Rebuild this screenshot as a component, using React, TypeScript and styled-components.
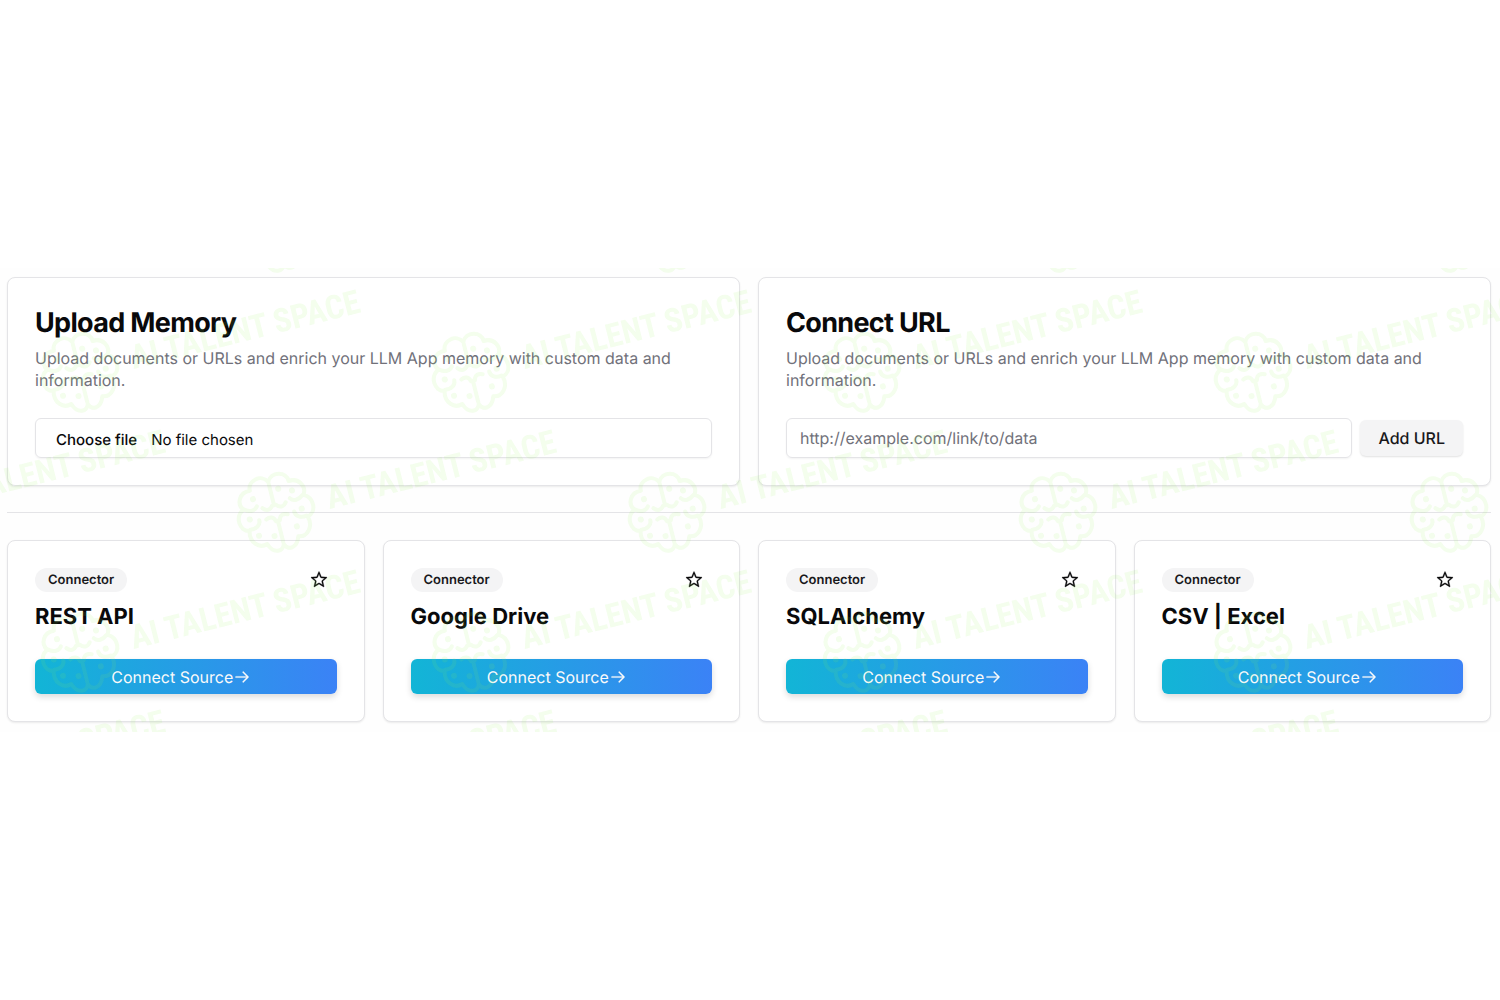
import React, { useState } from "react";
import styled, { createGlobalStyle } from "styled-components";

const GlobalStyle = createGlobalStyle`
  *, *::before, *::after { box-sizing: border-box; }
  body {
    margin: 0;
    background: #fff;
    color: #09090b;
    font-family: Inter, "Liberation Sans", sans-serif;
    font-size: 16px;
    line-height: 22px;
    text-rendering: geometricPrecision;
  }
  h2, h3, p { margin: 0; }
  button, input { font: inherit; color: inherit; text-rendering: inherit; }
`;

const Page = styled.main`
  min-height: 100vh;
  display: flex;
  flex-direction: column;
  justify-content: center;
`;

const Board = styled.div`
  position: relative;
  overflow: hidden;
  background: #fefefe;
  padding: 9px 9px 10px 7px;
`;

const Row = styled.section<{ $columns: number }>`
  display: grid;
  grid-template-columns: repeat(${(p) => p.$columns}, minmax(0, 1fr));
  gap: 18px;
`;

const Card = styled.article`
  background: #fff;
  border: 1px solid #e4e4e7;
  border-radius: 8px;
  padding: 27px;
  box-shadow: 0 1px 2px rgba(0, 0, 0, 0.08);
`;

const Title = styled.h2`
  font-size: 27px;
  line-height: 36px;
  font-weight: 700;
  letter-spacing: -0.025em;
`;

const Description = styled.p`
  margin-top: 6px;
  color: #71717a;
`;

const Controls = styled.form`
  display: flex;
  align-items: center;
  gap: 8px;
  margin-top: 27px;
`;

const field = `
  flex: 1;
  min-width: 0;
  height: 40px;
  border: 1px solid #e4e4e7;
  border-radius: 6px;
  background: transparent;
  box-shadow: 0 1px 2px rgba(0, 0, 0, 0.05);
`;

const FileField = styled.label`
  ${field}
  position: relative;
  display: flex;
  align-items: center;
  gap: 14px;
  padding: 4px 20px 0;
  font-size: 15px;
  cursor: pointer;
`;

const FileInput = styled.input`
  position: absolute;
  inset: 0;
  width: 100%;
  opacity: 0;
  cursor: pointer;
`;

const FileAction = styled.span`
  font-weight: 500;
`;

const UrlInput = styled.input`
  ${field}
  padding: 0 13px;
  outline: none;
  &::placeholder { color: #71717a; opacity: 1; }
`;

const HiddenLabel = styled.label`
  position: absolute;
  width: 1px;
  height: 1px;
  overflow: hidden;
  clip-path: inset(50%);
`;

const AddButton = styled.button`
  height: 36px;
  padding: 0 18px;
  border: 0;
  border-radius: 6px;
  background: #f4f4f5;
  color: #18181b;
  font-weight: 500;
  box-shadow: 0 1px 2px rgba(0, 0, 0, 0.12);
  cursor: pointer;
`;

const Divider = styled.hr`
  height: 1px;
  margin: 26px 0 27px;
  border: 0;
  background: #e4e4e7;
`;

const CardTop = styled.div`
  display: flex;
  align-items: center;
  justify-content: space-between;
  height: 24px;
`;

const Badge = styled.span`
  padding: 1px 13px;
  border-radius: 12px;
  background: #f4f4f5;
  color: #18181b;
  font-size: 13px;
  font-weight: 600;
`;

const StarButton = styled.button`
  display: grid;
  place-items: center;
  width: 36px;
  height: 36px;
  padding: 0;
  border: 0;
  background: transparent;
  cursor: pointer;
`;

const Name = styled.h3`
  margin-top: 8px;
  font-size: 22px;
  line-height: 34px;
  font-weight: 700;
`;

const ConnectButton = styled.button`
  display: flex;
  align-items: center;
  justify-content: center;
  width: 100%;
  height: 35px;
  margin-top: 25px;
  padding: 0 9px 0 0;
  border: 0;
  border-radius: 6px;
  background: linear-gradient(to right, #12b5d6, #3b82f6);
  color: #fafafa;
  box-shadow: 0 3px 6px rgba(0, 0, 0, 0.14);
  cursor: pointer;
`;

const Watermark = styled.svg`
  position: absolute;
  inset: 0;
  width: 100%;
  height: 100%;
  pointer-events: none;
  opacity: 0.1;
  color: #90f050;
  font-family: "Liberation Sans Narrow", "Roboto Condensed", "DejaVu Sans Condensed", sans-serif;
  font-size: 33px;
  font-weight: 700;
`;

const StarIcon = () => (
  <svg width="18" height="18" viewBox="0 0 15 15" fill="currentColor" stroke="currentColor" strokeWidth="0.25" aria-hidden="true">
    <path fillRule="evenodd" clipRule="evenodd" d="M6.97942 1.25171L6.9585 1.30199L5.58662 4.60039C5.54342 4.70426 5.44573 4.77523 5.3336 4.78422L1.7727 5.0697L1.71841 5.07405L1.38687 5.10063L1.08608 5.12475C0.820085 5.14607 0.712228 5.47802 0.914889 5.65162L1.14406 5.84793L1.39666 6.06431L1.43802 6.09974L4.15105 8.42374C4.23648 8.49692 4.2738 8.61176 4.24769 8.72118L3.41882 12.196L3.40618 12.249L3.32901 12.5725L3.25899 12.866C3.19708 13.1256 3.47945 13.3308 3.70718 13.1917L3.9647 13.0344L4.24854 12.861L4.29502 12.8326L7.34365 10.9705C7.43965 10.9119 7.5604 10.9119 7.6564 10.9705L10.705 12.8326L10.7515 12.861L11.0354 13.0344L11.2929 13.1917C11.5206 13.3308 11.803 13.1256 11.7411 12.866L11.671 12.5725L11.5939 12.249L11.5812 12.196L10.7524 8.72118C10.7263 8.61176 10.7636 8.49692 10.849 8.42374L13.562 6.09974L13.6034 6.06431L13.856 5.84793L14.0852 5.65162C14.2878 5.47802 14.18 5.14607 13.914 5.12475L13.6132 5.10063L13.2816 5.07405L13.2274 5.0697L9.66645 4.78422C9.55432 4.77523 9.45663 4.70426 9.41343 4.60039L8.04155 1.30199L8.02064 1.25171L7.89291 0.944609L7.77702 0.665992C7.67454 0.419604 7.32551 0.419604 7.22303 0.665992L7.10715 0.944609L6.97942 1.25171ZM7.50003 2.60397L6.50994 4.98442C6.32273 5.43453 5.89944 5.74207 5.41351 5.78103L2.84361 5.98705L4.8016 7.66428C5.17183 7.98142 5.33351 8.47903 5.2204 8.95321L4.62221 11.461L6.8224 10.1171C7.23842 9.86302 7.76164 9.86302 8.17766 10.1171L10.3778 11.461L9.77965 8.95321C9.66654 8.47903 9.82822 7.98142 10.1984 7.66428L12.1564 5.98705L9.58654 5.78103C9.10061 5.74207 8.67732 5.43453 8.49011 4.98442L7.50003 2.60397Z" />
  </svg>
);

const ArrowIcon = () => (
  <svg width="18" height="18" viewBox="0 0 15 15" fill="currentColor" stroke="currentColor" strokeWidth="0.3" aria-hidden="true">
    <path fillRule="evenodd" clipRule="evenodd" d="M8.14645 3.14645C8.34171 2.95118 8.65829 2.95118 8.85355 3.14645L12.8536 7.14645C13.0488 7.34171 13.0488 7.65829 12.8536 7.85355L8.85355 11.8536C8.65829 12.0488 8.34171 12.0488 8.14645 11.8536C7.95118 11.6583 7.95118 11.3417 8.14645 11.1464L11.2929 8H2.5C2.22386 8 2 7.77614 2 7.5C2 7.22386 2.22386 7 2.5 7H11.2929L8.14645 3.85355C7.95118 3.65829 7.95118 3.34171 8.14645 3.14645Z" />
  </svg>
);

const Brain = () => (
  <g fill="none" stroke="currentColor" strokeWidth="4" strokeLinecap="round" strokeLinejoin="round">
    <path d="M0 -32 C-5 -42 -20 -38 -20 -28 C-31 -29 -36 -18 -31 -11 C-41 -6 -40 9 -30 11 C-33 22 -25 31 -16 28 C-12 40 -2 39 0 32 C2 39 12 40 16 28 C25 31 33 22 30 11 C40 9 41 -6 31 -11 C36 -18 31 -29 20 -28 C20 -38 5 -42 0 -32 Z" />
    <path d="M0 -30 V-8 M0 30 V8 M-30 -11 C-25 -7 -20 -7 -17 -11 M30 -11 C25 -7 20 -7 17 -11 M-29 10 C-23 11 -18 8 -18 3 M29 10 C23 11 18 8 18 3 M-2 -8 C-5 -4 -9 -4 -12 -8 M2 -8 C5 -4 9 -4 12 -8 M-2 8 C-3 3 -7 2 -11 4 M2 8 C3 3 7 2 11 4" />
    <g fill="currentColor" stroke="none">
      <circle cx="-19" cy="-19" r="3" />
      <circle cx="8" cy="-23" r="3" />
      <circle cx="21" cy="-18" r="3" />
      <circle cx="-27" cy="0" r="3" />
      <circle cx="26" cy="2" r="3" />
      <circle cx="-22" cy="18" r="3" />
      <circle cx="-7" cy="22" r="3" />
      <circle cx="17" cy="18" r="3" />
    </g>
  </g>
);

const TILE_X = 391;
const TILE_Y = 140;

const marks = Array.from({ length: 5 }, (_, row) =>
  Array.from({ length: 6 }, (_, col) => ({
    x: 80 + (col - 1) * TILE_X + (row % 2 === 0 ? 196 : 0),
    y: -35 + row * TILE_Y,
    labelled: row > 0,
  }))
)
  .flat()
  .filter(({ x }) => x > -290 && x < 1540);

const WatermarkLayer = () => (
  <Watermark aria-hidden="true">
    {marks.map(({ x, y, labelled }) => (
      <g key={`${x}:${y}`} transform={`translate(${x} ${y}) rotate(-14)`}>
        <Brain />
        {labelled && x < 1440 && (
          <text x="53" y="9" fill="currentColor">AI TALENT SPACE</text>
        )}
      </g>
    ))}
  </Watermark>
);

const BLURB =
  "Upload documents or URLs and enrich your LLM App memory with custom data and information.";

const connectors = ["REST API", "Google Drive", "SQLAlchemy", "CSV | Excel"];

export default function App() {
  const [fileName, setFileName] = useState("No file chosen");

  return (
    <Page>
      <GlobalStyle />
      <Board>
        <Row $columns={2}>
          <Card>
            <Title>Upload Memory</Title>
            <Description>{BLURB}</Description>
            <Controls>
              <FileField htmlFor="memory-file">
                <FileAction>Choose file</FileAction>
                <span>{fileName}</span>
                <FileInput
                  id="memory-file"
                  type="file"
                  onChange={(e) => setFileName(e.target.files?.[0]?.name ?? "No file chosen")}
                />
              </FileField>
            </Controls>
          </Card>
          <Card>
            <Title>Connect URL</Title>
            <Description>{BLURB}</Description>
            <Controls onSubmit={(e) => e.preventDefault()}>
              <HiddenLabel htmlFor="source-url">URL</HiddenLabel>
              <UrlInput id="source-url" type="url" placeholder="http://example.com/link/to/data" />
              <AddButton type="submit">Add URL</AddButton>
            </Controls>
          </Card>
        </Row>
        <Divider />
        <Row $columns={4}>
          {connectors.map((name) => (
            <Card key={name}>
              <CardTop>
                <Badge>Connector</Badge>
                <StarButton type="button" aria-label={`Star ${name}`}>
                  <StarIcon />
                </StarButton>
              </CardTop>
              <Name>{name}</Name>
              <ConnectButton type="button">
                Connect Source
                <ArrowIcon />
              </ConnectButton>
            </Card>
          ))}
        </Row>
        <WatermarkLayer />
      </Board>
    </Page>
  );
}
